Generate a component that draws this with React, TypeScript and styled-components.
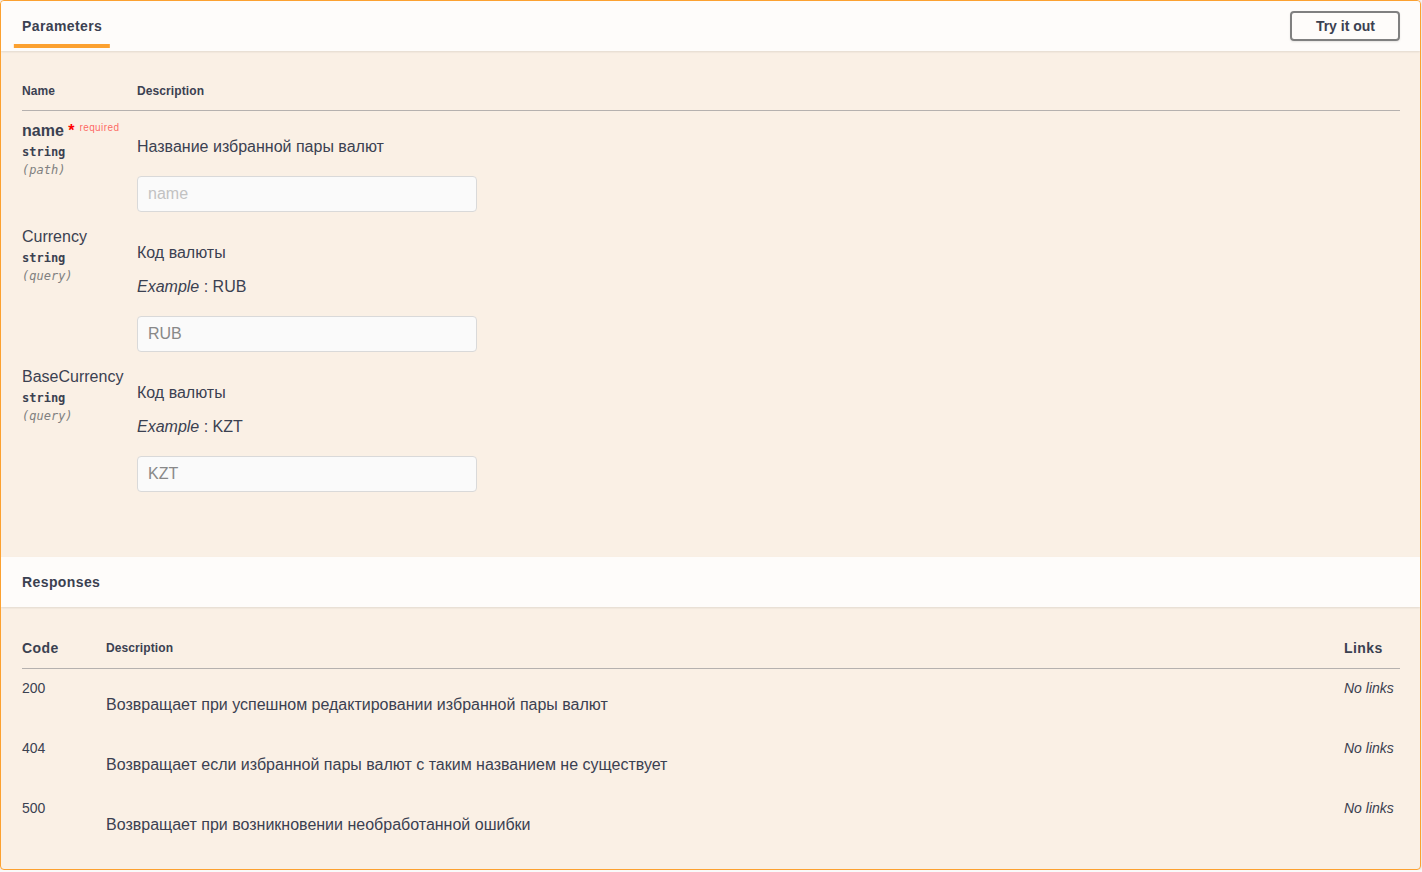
import React from "react";
import styled, { createGlobalStyle } from "styled-components";

const GlobalStyle = createGlobalStyle`
  html, body { margin: 0; padding: 0; background: #fafafa; }
  body { font-family: "Liberation Sans", Arial, sans-serif; color: #3b4151; }
  * { box-sizing: border-box; }
`;

const Block = styled.div`
  width: 1421px;
  border: 1px solid #fca130;
  border-radius: 4px;
  background: rgba(252, 161, 48, 0.1);
  box-shadow: 0 0 3px rgba(0, 0, 0, 0.19);
  overflow: hidden;
`;

const SectionHeader = styled.div`
  position: relative;
  display: flex;
  align-items: center;
  justify-content: space-between;
  min-height: 50px;
  padding: 8px 20px 8px 21px;
  background: rgba(255, 255, 255, 0.8);
  box-shadow: 0 1px 2px rgba(0, 0, 0, 0.1);
`;

const SectionTitle = styled.h4`
  margin: 0;
  font-size: 14px;
  font-weight: 700;
  line-height: 16px;
  letter-spacing: 0.4px;
  color: #3b4151;
`;

const ActiveTab = styled.span`
  position: relative;
  display: inline-block;
  &::after {
    content: "";
    position: absolute;
    left: 50%;
    bottom: -14px;
    width: 120%;
    height: 4px;
    transform: translateX(-50%);
    background: #fca130;
  }
`;

const TryButton = styled.button`
  height: 30px;
  padding: 5px 23px 5px 24px;
  border: 2px solid gray;
  border-radius: 4px;
  background: transparent;
  font-family: "Liberation Sans", Arial, sans-serif;
  font-size: 14px;
  font-weight: 700;
  line-height: 16px;
  color: #3b4151;
  box-shadow: 0 1px 2px rgba(0, 0, 0, 0.1);
  cursor: pointer;
`;

const TableContainer = styled.div<{ $bottom: number }>`
  padding: 20px 20px ${(p) => p.$bottom}px 21px;
`;

const Table = styled.table`
  width: 100%;
  border-collapse: collapse;
  border-spacing: 0;
`;

const Th = styled.th<{ $size?: number; $width?: number; $lh?: number }>`
  padding: 13px 0 11px;
  text-align: left;
  font-size: ${(p) => p.$size ?? 12}px;
  font-weight: 700;
  line-height: ${(p) => p.$lh ?? 17}px;
  letter-spacing: ${(p) => ((p.$size ?? 12) > 12 ? "0.4px" : "0.1px")};
  color: #3b4151;
  border-bottom: 1px solid rgba(59, 65, 81, 0.2);
  width: ${(p) => (p.$width ? `${p.$width}px` : "auto")};
`;

const Td = styled.td`
  padding: 10px 0 0;
  vertical-align: top;
  text-align: left;
`;

const ParamName = styled.div<{ $required?: boolean }>`
  padding-top: 1px;
  font-size: 16px;
  line-height: 18px;
  font-weight: ${(p) => (p.$required ? 700 : 400)};
  color: #3b4151;
  white-space: nowrap;
`;

const Star = styled.span`
  color: red;
`;

const RequiredMark = styled.span`
  font-size: 10px;
  font-weight: 400;
  letter-spacing: 0.4px;
  color: rgba(255, 0, 0, 0.6);
  padding: 0 5px;
  line-height: 0;
  vertical-align: 5px;
`;

const ParamType = styled.div`
  padding: 5px 0 4px;
  font-family: "DejaVu Sans Mono", "Liberation Mono", monospace;
  font-size: 12px;
  font-weight: 700;
  line-height: 14px;
  color: #3b4151;
`;

const ParamIn = styled.div`
  font-family: "DejaVu Sans Mono", "Liberation Mono", monospace;
  font-size: 12px;
  font-style: italic;
  font-weight: 400;
  line-height: 14px;
  color: gray;
`;

const Markdown = styled.p`
  margin: 16px 0 15px;
  padding-top: 1px;
  font-size: 16px;
  line-height: 18px;
  color: #3b4151;
  & + & {
    margin-top: 15px;
  }
`;

const Input = styled.input`
  display: block;
  width: 340px;
  height: 36px;
  margin: 20px 0 5px;
  padding: 8px 10px;
  border: 1px solid #d9d9d9;
  border-radius: 4px;
  background: #fafafa;
  color: #888;
  font-family: "Liberation Sans", Arial, sans-serif;
  font-size: 16px;
  outline: none;
  &::placeholder {
    color: #c2c2c2;
  }
`;

const Code = styled.div`
  font-size: 14px;
  line-height: 18px;
  color: #3b4151;
`;

const NoLinks = styled.i`
  display: block;
  font-size: 14px;
  line-height: 18px;
  color: #3b4151;
`;

type Param = {
  name: string;
  required?: boolean;
  location: string;
  description: string;
  example?: string;
  placeholder: string;
  value?: string;
};

const params: Param[] = [
  {
    name: "name",
    required: true,
    location: "path",
    description: "Название избранной пары валют",
    placeholder: "name",
  },
  {
    name: "Currency",
    location: "query",
    description: "Код валюты",
    example: "RUB",
    placeholder: "Currency",
    value: "RUB",
  },
  {
    name: "BaseCurrency",
    location: "query",
    description: "Код валюты",
    example: "KZT",
    placeholder: "BaseCurrency",
    value: "KZT",
  },
];

const responses = [
  { code: "200", text: "Возвращает при успешном редактировании избранной пары валют" },
  { code: "404", text: "Возвращает если избранной пары валют с таким названием не существует" },
  { code: "500", text: "Возвращает при возникновении необработанной ошибки" },
];

export default function App() {
  return (
    <>
      <GlobalStyle />
      <Block>
        <SectionHeader>
          <SectionTitle>
            <ActiveTab>Parameters</ActiveTab>
          </SectionTitle>
          <TryButton>Try it out</TryButton>
        </SectionHeader>
        <TableContainer $bottom={60}>
          <Table>
            <thead>
              <tr>
                <Th $width={115} $lh={15}>Name</Th>
                <Th $lh={15}>Description</Th>
              </tr>
            </thead>
            <tbody>
              {params.map((p) => (
                <tr key={p.name}>
                  <Td>
                    <ParamName $required={p.required}>
                      {p.name}
                      {p.required && (
                        <>
                          <Star>&nbsp;*</Star>
                          <RequiredMark>required</RequiredMark>
                        </>
                      )}
                    </ParamName>
                    <ParamType>string</ParamType>
                    <ParamIn>({p.location})</ParamIn>
                  </Td>
                  <Td>
                    <Markdown>{p.description}</Markdown>
                    {p.example && (
                      <Markdown>
                        <i>Example</i> : {p.example}
                      </Markdown>
                    )}
                    <Input
                      disabled
                      placeholder={p.placeholder}
                      defaultValue={p.value ?? ""}
                    />
                  </Td>
                </tr>
              ))}
            </tbody>
          </Table>
        </TableContainer>
        <SectionHeader>
          <SectionTitle>Responses</SectionTitle>
        </SectionHeader>
        <TableContainer $bottom={20}>
          <Table>
            <thead>
              <tr>
                <Th $size={14} $width={84}>Code</Th>
                <Th>Description</Th>
                <Th $size={14} $width={56}>Links</Th>
              </tr>
            </thead>
            <tbody>
              {responses.map((r) => (
                <tr key={r.code}>
                  <Td>
                    <Code>{r.code}</Code>
                  </Td>
                  <Td>
                    <Markdown>{r.text}</Markdown>
                  </Td>
                  <Td>
                    <NoLinks>No links</NoLinks>
                  </Td>
                </tr>
              ))}
            </tbody>
          </Table>
        </TableContainer>
      </Block>
    </>
  );
}
